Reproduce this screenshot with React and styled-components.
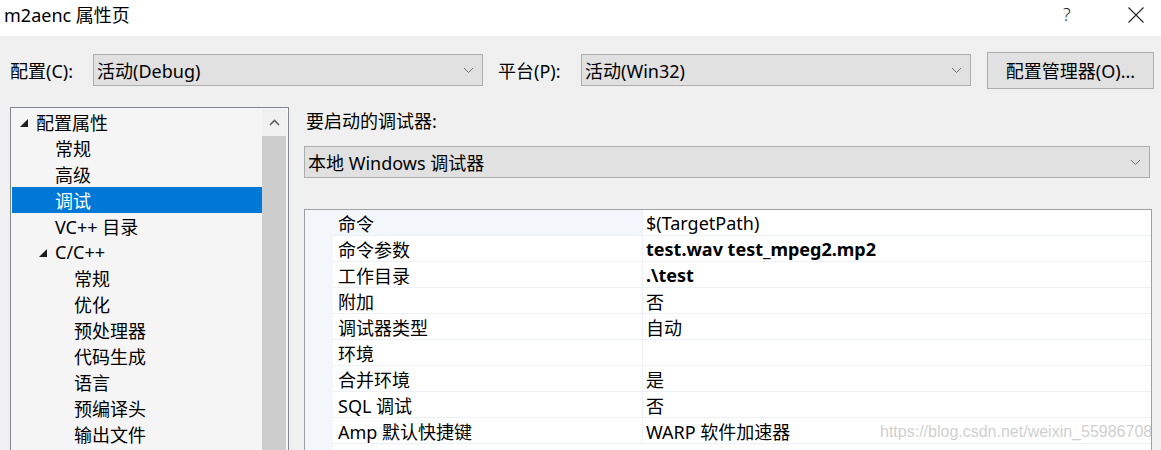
import React from "react";
import styled, { createGlobalStyle } from "styled-components";

const GlobalStyle = createGlobalStyle`
    html, body {
        margin: 0;
        padding: 0;
        background: #f0f0f0;
        overflow: hidden;
    }
    body {
        font-family: "Noto Sans", "Noto Sans CJK SC", sans-serif;
        font-size: 18px;
        color: #000;
    }
`;

const Window = styled.div`
    position: relative;
    width: 1161px;
    height: 450px;
    background: #f0f0f0;
    overflow: hidden;
    display: flex;
    flex-direction: column;
`;

const TitleBar = styled.div`
    height: 36px;
    background: #fff;
    display: flex;
    align-items: center;
    padding-left: 4px;
    flex-shrink: 0;
    .title {
        flex: 1;
        font-size: 18px;
        margin-top: -8px;
    }
    .help {
        font-size: 18px;
        font-weight: 300;
        color: #222;
        width: 30px;
        margin-right: 35px;
        margin-top: -8px;
    }
    .close {
        width: 16px;
        height: 16px;
        margin-right: 17px;
        margin-top: -6px;
    }
`;

const TopRow = styled.div`
    display: flex;
    align-items: center;
    height: 36px;
    flex-shrink: 0;
    margin-top: 16px;
    padding-left: 10px;
`;

const Label = styled.div`
    width: ${(p) => p.$w}px;
    margin-left: ${(p) => p.$ml || 0}px;
    flex-shrink: 0;
`;

const Combo = styled.div`
    box-sizing: border-box;
    width: ${(p) => (p.$w ? `${p.$w}px` : "auto")};
    flex: none;
    height: 32px;
    border: 1px solid #adadad;
    background: #e1e1e1;
    display: flex;
    align-items: center;
    padding: 0 8px 0 3px;
    .text {
        flex: 1;
        white-space: nowrap;
    }
    svg {
        flex-shrink: 0;
    }
`;

const Button = styled.div`
    box-sizing: border-box;
    width: 167px;
    height: 37px;
    border: 1px solid #adadad;
    background: #e1e1e1;
    display: flex;
    align-items: center;
    justify-content: center;
    margin-left: 16px;
`;

const Main = styled.div`
    display: flex;
    margin-top: 19px;
    padding-left: 10px;
    flex: 1;
    min-height: 0;
`;

const TreePanel = styled.div`
    box-sizing: border-box;
    width: 279px;
    border: 1px solid #828790;
    border-bottom: none;
    background: #f5f5f5;
    display: flex;
    padding: 1px 1px 0 1px;
`;

const TreeList = styled.div`
    flex: 1;
    display: flex;
    flex-direction: column;
`;

const TreeItem = styled.div`
    height: 26px;
    flex-shrink: 0;
    display: flex;
    align-items: center;
    padding-left: ${(p) => 8 + p.$level * 19}px;
    background: ${(p) => (p.$selected ? "#0078d7" : "transparent")};
    color: ${(p) => (p.$selected ? "#fff" : "#000")};
    white-space: nowrap;
    .tri {
        width: 16px;
        flex-shrink: 0;
        display: flex;
        align-items: center;
        margin-top: 2px;
    }
    .label {
        margin-left: ${(p) => (p.$expander ? 0 : 16)}px;
    }
`;

const ScrollBar = styled.div`
    width: 24px;
    display: flex;
    flex-direction: column;
    background: #f0f0f0;
    margin-right: 1px;
    .up {
        height: 27px;
        display: flex;
        align-items: center;
        justify-content: center;
    }
    .thumb {
        flex: 1;
        background: #cdcdcd;
    }
`;

const RightPanel = styled.div`
    flex: 1;
    margin-left: 15px;
    margin-right: 9px;
    display: flex;
    flex-direction: column;
    min-width: 0;
    .caption {
        height: 26px;
        flex-shrink: 0;
        display: flex;
        align-items: center;
        padding-left: 2px;
    }
`;

const DebuggerCombo = styled(Combo)`
    margin-top: 13px;
    margin-right: 2px;
`;

const Grid = styled.div`
    margin-top: 31px;
    flex: 1;
    border: 1px solid #a0a0a0;
    border-bottom: none;
    background: #fff;
    display: flex;
    flex-direction: column;
`;

const GridRow = styled.div`
    display: flex;
    height: 26px;
    flex-shrink: 0;
    .gutter {
        width: 28px;
        background: #f3f6fb;
        flex-shrink: 0;
    }
    .name, .value {
        box-sizing: border-box;
        display: flex;
        align-items: center;
        border-bottom: 1px solid #edf1f7;
        white-space: nowrap;
    }
    .name {
        width: 310px;
        flex-shrink: 0;
        padding-left: 5px;
        border-right: 1px solid #edf1f7;
        background: ${(p) => (p.$first ? "#f3f6fb" : "#fff")};
    }
    .value {
        flex: 1;
        padding-left: 3px;
        font-weight: ${(p) => (p.$bold ? 700 : 400)};
    }
`;

const GridFill = styled.div`
    flex: 1;
    display: flex;
    .gutter {
        width: 28px;
        background: #f3f6fb;
    }
`;

const Watermark = styled.div`
    position: absolute;
    left: 880px;
    top: 423px;
    font-family: "Liberation Sans", Arial, sans-serif;
    font-size: 16px;
    color: rgba(190, 190, 190, 0.75);
    white-space: nowrap;
    pointer-events: none;
`;

const Chevron = ({ up }) => (
    <svg width="11" height="7" viewBox="0 0 11 7">
        <polyline
            points={up ? "1,6 5.5,1.5 10,6" : "1,1 5.5,5.5 10,1"}
            fill="none"
            stroke={up ? "#606060" : "#707070"}
            strokeWidth={up ? 1.6 : 1}
        />
    </svg>
);

const Expander = ({ color }) => (
    <svg width="8" height="8" viewBox="0 0 8 8">
        <polygon points="8,0 8,8 0,8" fill={color} />
    </svg>
);

const treeItems = [
    { label: "配置属性", level: 0, expander: true },
    { label: "常规", level: 1 },
    { label: "高级", level: 1 },
    { label: "调试", level: 1, selected: true },
    { label: "VC++ 目录", level: 1 },
    { label: "C/C++", level: 1, expander: true },
    { label: "常规", level: 2 },
    { label: "优化", level: 2 },
    { label: "预处理器", level: 2 },
    { label: "代码生成", level: 2 },
    { label: "语言", level: 2 },
    { label: "预编译头", level: 2 },
    { label: "输出文件", level: 2 },
];

const props = [
    { name: "命令", value: "$(TargetPath)" },
    { name: "命令参数", value: "test.wav test_mpeg2.mp2", bold: true },
    { name: "工作目录", value: ".\\test", bold: true },
    { name: "附加", value: "否" },
    { name: "调试器类型", value: "自动" },
    { name: "环境", value: "" },
    { name: "合并环境", value: "是" },
    { name: "SQL 调试", value: "否" },
    { name: "Amp 默认快捷键", value: "WARP 软件加速器" },
];

const App = () => {
    return (
        <Window>
            <GlobalStyle />
            <TitleBar>
                <div className="title">m2aenc 属性页</div>
                <div className="help">?</div>
                <svg className="close" viewBox="0 0 16 16">
                    <path d="M0.5,0.5 L15.5,15.5 M15.5,0.5 L0.5,15.5" stroke="#222" strokeWidth="1.1" />
                </svg>
            </TitleBar>

            <TopRow>
                <Label $w={83}>配置(C):</Label>
                <Combo $w={390}>
                    <span className="text">活动(Debug)</span>
                    <Chevron />
                </Combo>
                <Label $w={83} $ml={15}>平台(P):</Label>
                <Combo $w={390}>
                    <span className="text">活动(Win32)</span>
                    <Chevron />
                </Combo>
                <Button>配置管理器(O)...</Button>
            </TopRow>

            <Main>
                <TreePanel>
                    <TreeList>
                        {treeItems.map((item, i) => (
                            <TreeItem
                                key={i}
                                $level={item.level}
                                $selected={item.selected}
                                $expander={item.expander}
                            >
                                {item.expander && (
                                    <span className="tri">
                                        <Expander color="#1e1e1e" />
                                    </span>
                                )}
                                <span className="label">{item.label}</span>
                            </TreeItem>
                        ))}
                    </TreeList>
                    <ScrollBar>
                        <div className="up">
                            <Chevron up />
                        </div>
                        <div className="thumb" />
                    </ScrollBar>
                </TreePanel>

                <RightPanel>
                    <div className="caption">要启动的调试器:</div>
                    <DebuggerCombo>
                        <span className="text">本地 Windows 调试器</span>
                        <Chevron />
                    </DebuggerCombo>
                    <Grid>
                        {props.map((p, i) => (
                            <GridRow key={i} $first={i === 0} $bold={p.bold}>
                                <div className="gutter" />
                                <div className="name">{p.name}</div>
                                <div className="value">{p.value}</div>
                            </GridRow>
                        ))}
                        <GridFill>
                            <div className="gutter" />
                        </GridFill>
                    </Grid>
                </RightPanel>
            </Main>

            <Watermark>https://blog.csdn.net/weixin_55986708</Watermark>
        </Window>
    );
};

export default App;
